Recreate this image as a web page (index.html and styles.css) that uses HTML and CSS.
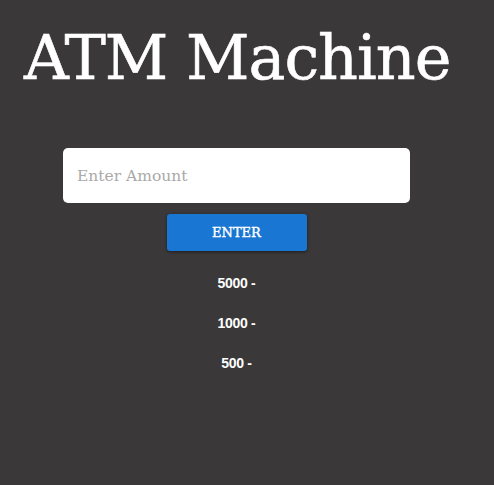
FILE: index.html
```html
<!DOCTYPE html>
<html>
<head>
<meta charset="utf-8">
<link rel="stylesheet" href="styles.css">
</head>
<body>
<div class="app">
  <h1 class="title">ATM Machine</h1>
  <div class="form">
    <input class="amount" type="text" placeholder="Enter Amount">
    <button class="enter">ENTER</button>
  </div>
  <ul class="notes">
    <li>5000 -</li>
    <li>1000 -</li>
    <li>500 -</li>
  </ul>
</div>
</body>
</html>
```

FILE: styles.css
```css
html, body {
  margin: 0;
  padding: 0;
  background: #3a3839;
  height: 100%;
}
.app {
  width: 473px;
  font-family: "DejaVu Serif", "Liberation Serif", serif;
  color: #fff;
}
.title {
  margin: 0;
  padding: 20px 0 0 24px;
  font-weight: normal;
  font-size: 62px;
  line-height: 76px;
  letter-spacing: -1px;
  color: #fff;
  -webkit-text-stroke: 0.6px #fff;
}
.form {
  display: flex;
  flex-direction: column;
  align-items: center;
  margin-top: 52px;
}
.amount {
  box-sizing: border-box;
  width: 347px;
  height: 55px;
  border: none;
  border-radius: 5px;
  padding: 0 14px;
  font-family: "DejaVu Serif", serif;
  font-size: 15.5px;
  color: #333;
  outline: none;
}
.amount::placeholder {
  color: #a9a9a9;
}
.enter {
  margin-top: 11px;
  width: 140px;
  height: 37px;
  padding: 0;
  border: none;
  border-radius: 3px;
  background: #1976d2;
  color: #fff;
  font-family: "DejaVu Serif", serif;
  font-weight: normal;
  font-size: 13px;
  -webkit-text-stroke: 0.4px #fff;
  box-shadow: 0 1px 3px rgba(0,0,0,0.5);
}
.notes {
  list-style: none;
  margin: 24px 0 0;
  padding: 0;
  text-align: center;
  font-family: "Liberation Sans", Arial, sans-serif;
  font-weight: bold;
  font-size: 14px;
  letter-spacing: -0.3px;
}
.notes li {
  height: 40px;
  line-height: 16px;
}
```
